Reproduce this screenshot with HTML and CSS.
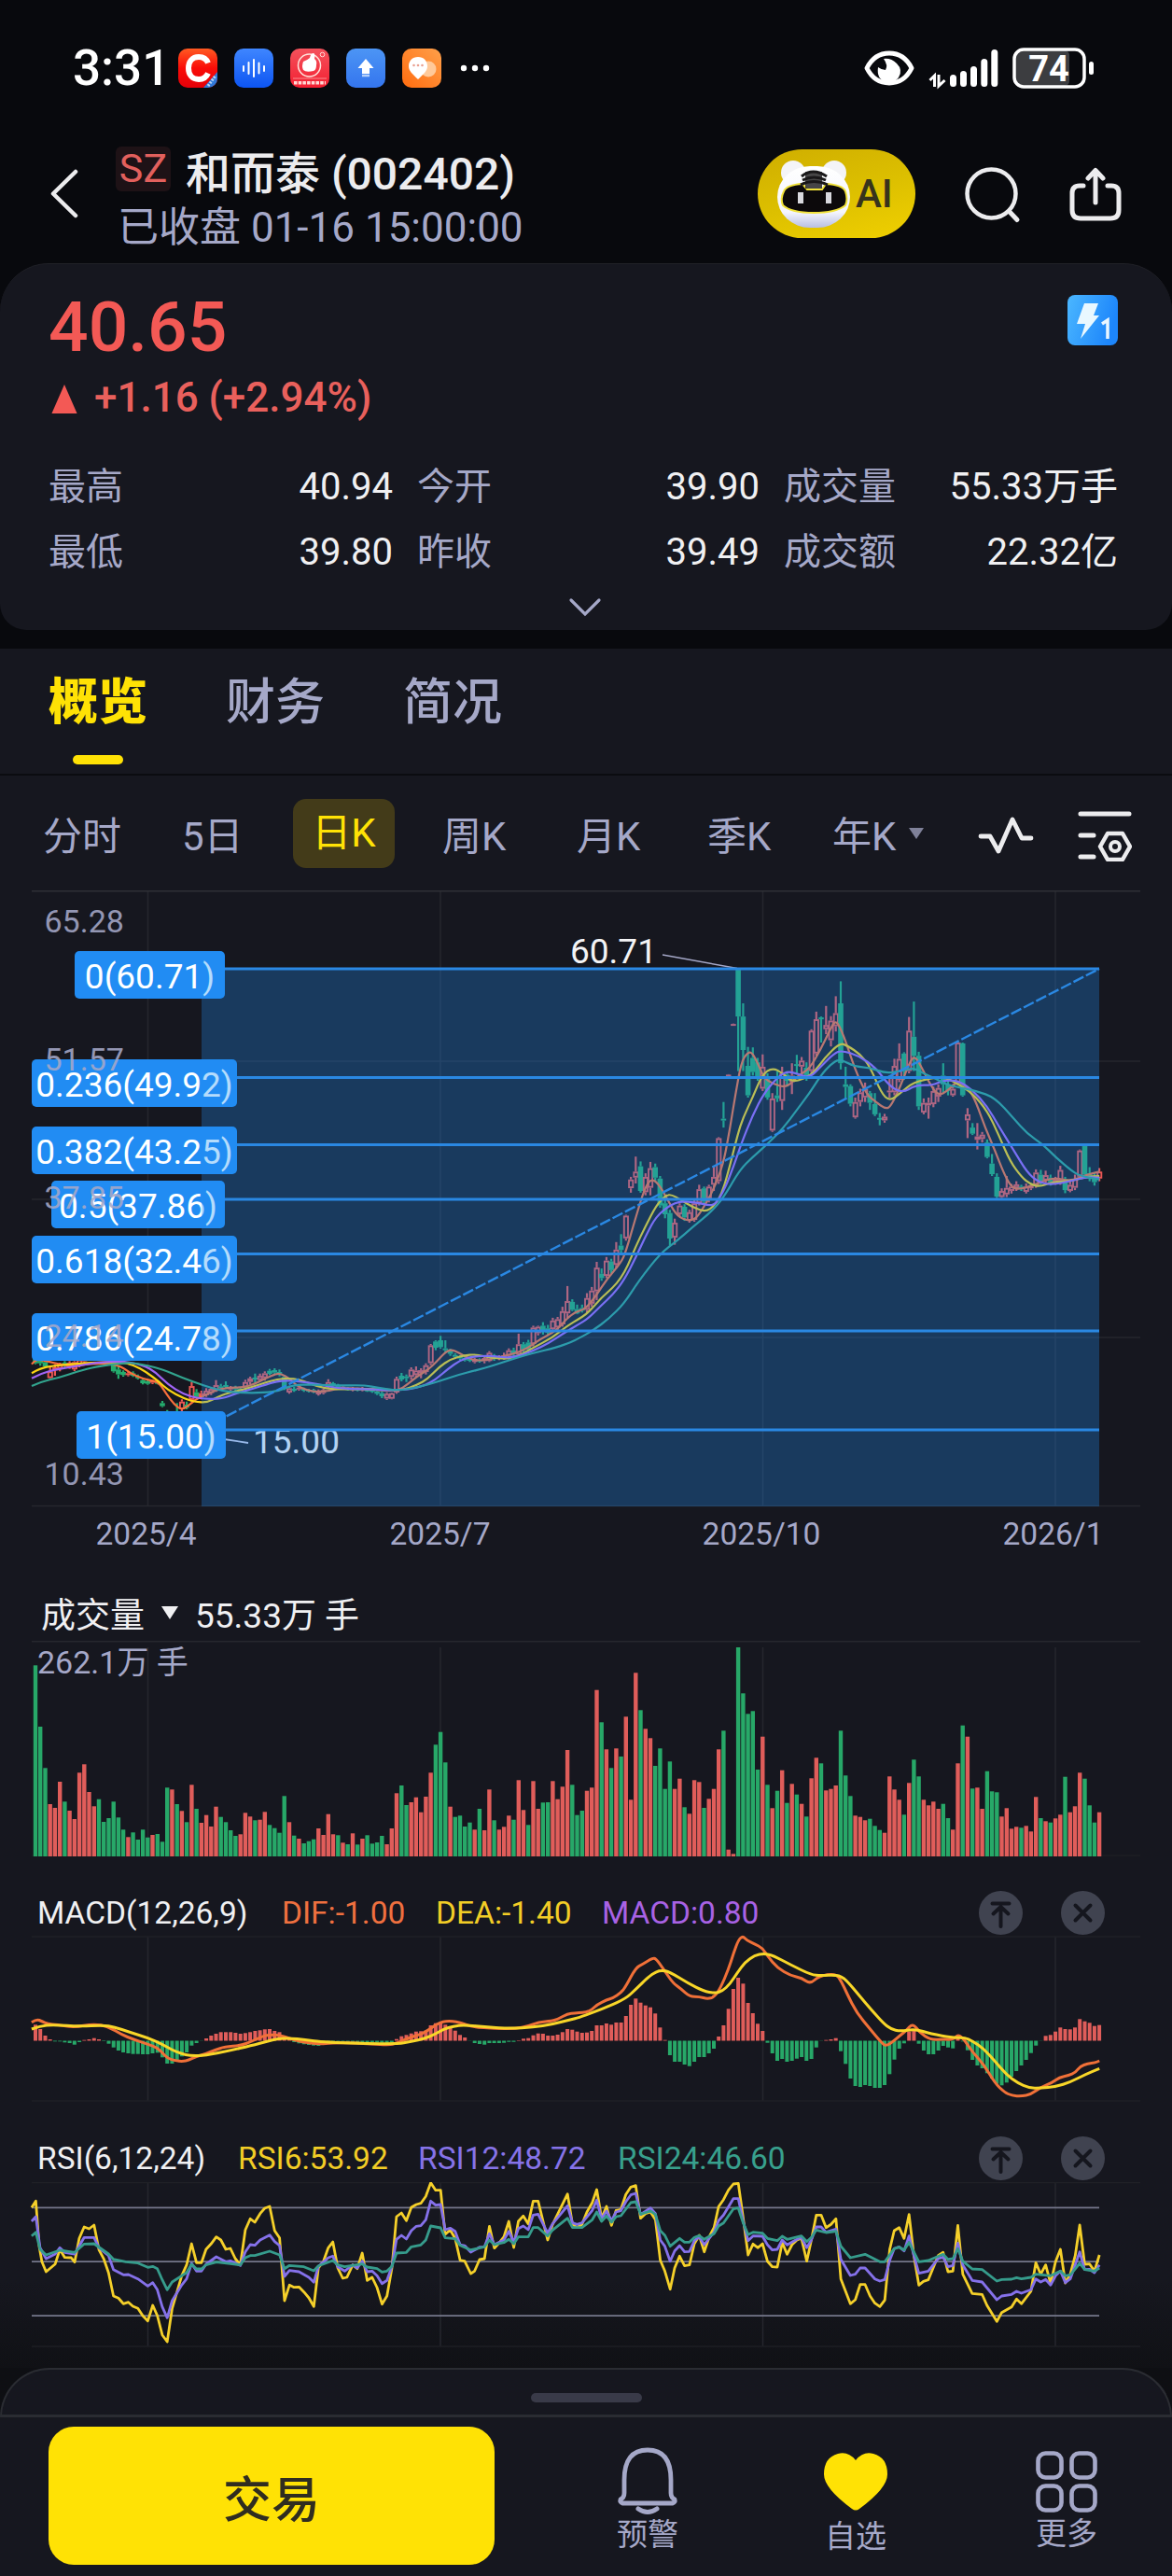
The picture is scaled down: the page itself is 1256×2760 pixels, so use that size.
FILE: index.html
```html
<!DOCTYPE html>
<html lang="zh-CN">
<head>
<meta charset="utf-8">
<title>和而泰 (002402)</title>
<link rel="stylesheet" href="styles.css">
</head>
<body>
<header class="status">
  <span class="clock">3:31</span>
  <div class="apps">
    <svg class="app" viewBox="0 0 42 42"><defs><linearGradient id="a1" x2="0" y2="1"><stop stop-color="#ff5a22"/><stop offset=".5" stop-color="#fa0c08"/><stop offset="1" stop-color="#e30009"/></linearGradient><clipPath id="ac"><rect width="42" height="42" rx="10"/></clipPath></defs><rect width="42" height="42" rx="10" fill="url(#a1)"/><path d="M32 15.500c-2-5-6-6.500-10-6.500-7 0-11 5-11 12s4 12 11 12c4 0 8-2 10-6.500" fill="none" stroke="#fff" stroke-width="6"/><path d="M42 25v17H27z" fill="#2e78d8" clip-path="url(#ac)"/><path d="M32 40l8-11" stroke="#b8d4f5" stroke-width="3" stroke-dasharray="2 1.500"/></svg>
    <svg class="app" viewBox="0 0 42 42"><defs><linearGradient id="a2" x2="0" y2="1"><stop stop-color="#3f86ff"/><stop offset="1" stop-color="#0d55f2"/></linearGradient></defs><rect width="42" height="42" rx="10" fill="url(#a2)"/><path d="M10 19v5M15.500 15v12M21 12v18M26.500 15.500v11M32 19v5" stroke="#fff" stroke-width="2" stroke-linecap="round"/></svg>
    <svg class="app" viewBox="0 0 42 42"><defs><linearGradient id="a3" x2="0" y2="1"><stop stop-color="#f4525c"/><stop offset="1" stop-color="#f31f31"/></linearGradient></defs><rect width="42" height="42" rx="10" fill="url(#a3)"/><circle cx="20.500" cy="18" r="12" fill="none" stroke="#ffe4dc" stroke-width="1.500"/><path d="M14 14q5-2 7-4 1-5 4-5 2 0 1 6 3 2 2 7 0 5-3 6-8 2-11-1-2-4 0-9z" fill="#fff"/><circle cx="34.500" cy="6.500" r="2.300" fill="none" stroke="#ffd9d5"/><path d="M3 32h36" stroke="#f98d90"/><path d="M4 36.800h34" stroke="#ffd9d5" stroke-width="3.600" stroke-dasharray="3.500 1.200"/></svg>
    <svg class="app" viewBox="0 0 42 42"><defs><linearGradient id="a4" x2="0" y2="1"><stop stop-color="#4c95f5"/><stop offset="1" stop-color="#3475ee"/></linearGradient></defs><rect width="42" height="42" rx="10" fill="url(#a4)"/><path d="M21 11l8.500 10h-4.500v6h-8v-6h-4.500z" fill="#fff"/><path d="M17 29h8" stroke="#b5d1fb" stroke-width="2.500"/></svg>
    <svg class="app" viewBox="0 0 42 42"><defs><linearGradient id="a5" x1="1" x2="0" y2="1"><stop stop-color="#ffa04a"/><stop offset="1" stop-color="#ff6c0f"/></linearGradient></defs><rect width="42" height="42" rx="10" fill="url(#a5)"/><circle cx="28" cy="22" r="8.500" fill="#ffc999"/><path d="M17 9c6 0 10 4 10 10 0 5-4 8-10 14-6-6-10-9-10-14 0-6 4-10 10-10z" fill="#fff"/><g fill="#e9a090"><circle cx="12.500" cy="18" r="1.300"/><circle cx="17" cy="18" r="1.300"/><circle cx="21.500" cy="18" r="1.300"/></g></svg>
  </div>
  <svg class="dots" viewBox="0 0 32 8" fill="#fff"><circle cx="4" cy="4" r="3.200"/><circle cx="16" cy="4" r="3.200"/><circle cx="28" cy="4" r="3.200"/></svg>
  <svg class="system" viewBox="924 48 252 48">
    <path d="M929 72q8-16 24-16t24 16q-8 16-24 16t-24-16z" fill="none" stroke="#fff" stroke-width="5" stroke-linejoin="round"/><path d="M947 62q8-1 14 5 7 7 2 15-5 7-13 5-11-3-9-16 4 3 8 3 3-5-2-12z" fill="#fff"/>
    <path d="M996.500 85l5-5v12M1006 79v12l6.500-6" fill="none" stroke="#fff" stroke-width="3"/>
    <path d="M1021.500 82.500v6M1032.500 78.500v10M1043.500 73.500v15M1054.800 65.500v23M1065.800 55.500v33" stroke="#fff" stroke-width="7" stroke-linecap="round"/>
    <rect x="1088" y="53" width="58" height="38" rx="5" fill="#3c3d40"/><rect x="1087" y="52" width="75" height="40" rx="10" fill="none" stroke="#fff" stroke-width="3.500"/><path d="M1169.500 67.500v9" stroke="#fff" stroke-width="5" stroke-linecap="round"/>
    <text x="1124" y="86" class="battery" text-anchor="middle">74</text>
  </svg>
</header>

<nav class="topbar">
  <svg class="back" viewBox="0 0 34 54"><path d="M30 4L6 27.500 30 51" fill="none" stroke="#ececee" stroke-width="4.500" stroke-linecap="round" stroke-linejoin="round"/></svg>
  <div class="name">
    <div class="title"><span class="market">SZ</span><span>和而泰 (002402)</span></div>
    <div class="session">已收盘 01-16 15:00:00</div>
  </div>
  <div class="ai">
    <svg viewBox="0 0 84 80"><defs><linearGradient id="hd" x2="0" y2="1"><stop stop-color="#fff"/><stop offset=".75" stop-color="#f4f5fd"/><stop offset="1" stop-color="#b9bfe2"/></linearGradient></defs><circle cx="20" cy="16" r="13" fill="#f4f4f7"/><circle cx="64" cy="16" r="13" fill="#f4f4f7"/><rect x="3" y="9" width="78" height="66" rx="35" fill="url(#hd)"/><path d="M10 36q3-7 20-8l5 6h16l4-6q18 1 21 8 3 9 0 15-10 8-34 8t-33-8q-3-7 1-15z" fill="#0c090b" stroke="#f1e23a" stroke-width="2"/><path d="M29 20q12-10 27 0M30 24q12-6 25 0M28 29q14-7 29 0" fill="none" stroke="#191819" stroke-width="3"/><path d="M33 15h18v18H33z" fill="#191819" opacity=".8"/><path d="M25 37h6v12h-6zM55 37h6v12h-6z" fill="#d9d9de"/></svg>
    <span>AI</span>
  </div>
  <svg class="search" viewBox="0 0 62 62"><ellipse cx="28.500" cy="28.500" rx="26" ry="26" fill="none" stroke="#ececee" stroke-width="4.500"/><path d="M48 48l8 8.500" stroke="#ececee" stroke-width="5" stroke-linecap="round"/></svg>
  <svg class="share" viewBox="0 0 56 58"><path d="M15 20H11q-8 0-8 8v18q0 9 9 9h32q9 0 9-9V28q0-8-8-8h-4M28 38V5M20 12l8-8.500 8 8.500" fill="none" stroke="#ececee" stroke-width="5" stroke-linecap="round" stroke-linejoin="round"/></svg>
</nav>

<section class="quote">
  <svg class="level" viewBox="0 0 54 54"><defs><linearGradient id="lv" x2="1" y2=".3"><stop stop-color="#4bb7ff"/><stop offset="1" stop-color="#1d86fb"/></linearGradient></defs><rect width="54" height="54" rx="8" fill="url(#lv)"/><path d="M18 9h15l-5 13h6L14 47l5-16h-9z" fill="#e9f8ff"/><path d="M37 31l6-4v20" fill="none" stroke="#eaf6ff" stroke-width="3.500"/></svg>
  <div class="price">40.65</div>
  <div class="change"><svg viewBox="0 0 28 32"><path d="M14 0l14 32H0z" fill="#f35955"/></svg>+1.16 (+2.94%)</div>
  <div class="stats">
    <div><i>最高</i><b>40.94</b></div><div><i>今开</i><b>39.90</b></div><div><i>成交量</i><b>55.33万手</b></div>
    <div><i>最低</i><b>39.80</b></div><div><i>昨收</i><b>39.49</b></div><div><i>成交额</i><b>22.32亿</b></div>
  </div>
  <svg class="expand" viewBox="0 0 36 22"><path d="M3 3l15 15L33 3" fill="none" stroke="#a5a8c8" stroke-width="3.200" stroke-linecap="round"/></svg>
</section>

<main>
  <div class="tabs"><span class="on">概览</span><span>财务</span><span>简况</span></div>
  <div class="periods">
    <span>分时</span><span>5日</span><span class="sel">日K</span><span>周K</span><span>月K</span><span>季K</span>
    <span>年K</span><svg class="tri" viewBox="0 0 16 12"><path d="M0 0h16L8 12z" fill="#7f8199"/></svg>
    <svg class="pulse" viewBox="0 0 60 42"><path d="M3 22h10l9 16L37 4l10 20h10" fill="none" stroke="#ececee" stroke-width="4.800" stroke-linecap="round" stroke-linejoin="round"/></svg>
    <svg class="tune" viewBox="0 0 58 54"><path d="M3 3h52M3 26h14M3 49h14" stroke="#ececee" stroke-width="5" stroke-linecap="round"/><path d="M32 24h16l8 14-8 14H32l-8-14z" fill="none" stroke="#ececee" stroke-width="4.500" stroke-linejoin="round"/><circle cx="40" cy="38" r="5" fill="none" stroke="#ececee" stroke-width="4"/></svg>
  </div>
  <svg id="kline" class="kline" viewBox="0 954 1256 726"></svg>
  <div class="vol-head"><span>成交量</span><svg viewBox="0 0 18 14"><path d="M0 0h18l-9 14z" fill="#f0f0f2"/></svg><span>55.33万 手</span></div>
  <svg id="volume" class="volume" viewBox="0 1758 1256 265"></svg>
  <div class="ind-head macd-head"><span>MACD(12,26,9)</span><span class="orange">DIF:-1.00</span><span class="gold">DEA:-1.40</span><span class="violet">MACD:0.80</span>
    <svg class="round" viewBox="0 0 47 47"><circle cx="23.500" cy="23.500" r="23.500" fill="#404350"/><path d="M14.500 13.500h18M23.500 38V17M15.500 24.500l8-7.500 8 7.500" fill="none" stroke="#15161e" stroke-width="4" stroke-linecap="round"/></svg>
    <svg class="round" viewBox="0 0 47 47"><circle cx="23.500" cy="23.500" r="23.500" fill="#404350"/><path d="M15.500 15.500l16 16M31.500 15.500l-16 16" stroke="#15161e" stroke-width="4" stroke-linecap="round"/></svg>
  </div>
  <svg id="macd" class="macd" viewBox="0 2075 1256 211"></svg>
  <div class="ind-head rsi-head"><span>RSI(6,12,24)</span><span class="gold">RSI6:53.92</span><span class="purple">RSI12:48.72</span><span class="teal">RSI24:46.60</span>
    <svg class="round" viewBox="0 0 47 47"><circle cx="23.500" cy="23.500" r="23.500" fill="#404350"/><path d="M14.500 13.500h18M23.500 38V17M15.500 24.500l8-7.500 8 7.500" fill="none" stroke="#15161e" stroke-width="4" stroke-linecap="round"/></svg>
    <svg class="round" viewBox="0 0 47 47"><circle cx="23.500" cy="23.500" r="23.500" fill="#404350"/><path d="M15.500 15.500l16 16M31.500 15.500l-16 16" stroke="#15161e" stroke-width="4" stroke-linecap="round"/></svg>
  </div>
  <svg id="rsi" class="rsi" viewBox="0 2338 1256 199"></svg>
</main>

<div class="dock"><div class="drawer"><i></i></div></div>
<footer class="actions">
  <button class="trade">交易</button>
  <div class="act alert"><svg viewBox="0 0 66 74"><path d="M8 36Q8 4 33 4t25 32v14q0 5 4 7 1 3-2 4H6q-3-1-2-4 4-2 4-7z" fill="none" stroke="#a5a8c8" stroke-width="4.800" stroke-linejoin="round"/><path d="M23 67q10 7 20 0" fill="none" stroke="#a5a8c8" stroke-width="5" stroke-linecap="round"/></svg><span>预警</span></div>
  <div class="act fav"><svg viewBox="0 0 68 62"><path d="M34 8Q42-2 53 1 68 5 68 23 68 38 38 60q-4 3-8 0Q0 38 0 23 0 5 15 1 26-2 34 8z" fill="#ffe205"/></svg><span>自选</span></div>
  <div class="act more"><svg viewBox="0 0 66 66"><g fill="none" stroke="#a5a8c8" stroke-width="4.600"><rect x="2.500" y="2.500" width="25" height="26" rx="8"/><rect x="38.500" y="2.500" width="25" height="26" rx="8"/><rect x="2.500" y="37.500" width="25" height="26" rx="8"/><rect x="38.500" y="37.500" width="25" height="26" rx="8"/></g></svg><span>更多</span></div>
</footer>
<script src="charts.js"></script>
</body>
</html>
```

FILE: styles.css
```css
* { box-sizing: border-box; }
body { margin: 0; width: 1256px; height: 2760px; overflow: hidden; background: #08090d; color: #f0f0f2; font-family: Roboto, "Noto Sans CJK SC", sans-serif; }
svg { display: block; flex: none; }
i, b { font-style: normal; font-weight: 400; }

.status { height: 146px; display: flex; align-items: center; padding: 0 80px 0 78px; }
.clock { width: 113px; font-size: 53px; font-weight: 500; color: #fff; }
.apps { display: flex; gap: 18px; }
.app { width: 42px; height: 42px; }
.dots { width: 32px; height: 8px; margin-left: 20px; }
.system { width: 252px; height: 48px; margin-left: auto; }
.battery { font-size: 38px; font-weight: 700; fill: #fff; }

.topbar { height: 136px; display: flex; align-items: flex-start; }
.back { width: 34px; height: 54px; margin: 34px 0 0 51px; }
.name { width: 727px; padding: 6px 0 0 39px; }
.title { display: flex; align-items: center; height: 60px; font-size: 48px; font-weight: 500; color: #ececee; white-space: nowrap; }
.market { width: 59px; height: 48px; margin: -3px 16px 0 0; border-radius: 6px; background: #1e1216; color: #e2605d; font-size: 43px; font-weight: 400; line-height: 47px; text-align: center; }
.session { height: 60px; margin-left: 2px; font-size: 44px; line-height: 64px; color: #a5a8c8; white-space: nowrap; }
.ai { width: 169px; height: 95px; margin-top: 14px; border-radius: 48px; background: linear-gradient(165deg, #cfae00 0%, #dcbf00 50%, #f0d000 100%); display: flex; align-items: center; padding-left: 18px; }
.ai svg { width: 84px; height: 80px; margin-top: 2px; }
.ai span { margin-left: 3px; font-size: 42px; font-weight: 500; color: #37331c; }
.search { width: 62px; height: 62px; margin: 33px 0 0 53px; }
.share { width: 56px; height: 58px; margin: 33px 0 0 50px; }

.quote { height: 393px; background: #16171f; border-radius: 52px 52px 28px 28px; border-top: 1px solid #202127; position: relative; padding: 22px 58px 0 52px; }
.level { position: absolute; right: 58px; top: 33px; width: 54px; height: 54px; }
.price { font-size: 75px; line-height: 90px; font-weight: 500; color: #f35955; }
.change { display: flex; align-items: center; height: 50px; margin-top: 6px; font-size: 44px; font-weight: 500; color: #e9605c; }
.change svg { width: 28px; height: 31px; margin: 2px 18px 0 3px; }
.stats { display: grid; grid-template-columns: 369px 367px 358px; column-gap: 26px; grid-auto-rows: 70px; margin-top: 36px; width: 1146px; font-size: 40px; line-height: 70px; }
.stats div { display: flex; justify-content: space-between; }
.stats i { color: #a5a8c8; }
.expand { width: 36px; height: 22px; margin: 13px auto 0 557px; }

main { margin-top: 20px; height: 1842px; background: linear-gradient(#16171f 0 1750px, #101115 1842px); }
.tabs { height: 136px; border-bottom: 2px solid #0b0c10; display: flex; padding: 0 52px; font-size: 53px; font-weight: 500; color: #a5a8c8; gap: 84px; line-height: 116px; }
.tabs .on { color: #ffe205; font-weight: 900; }
.tabs .on::after { content: ""; display: block; width: 54px; height: 10px; margin: -2px auto 0; border-radius: 5px; background: #ffe205; }
.periods { height: 123px; display: grid; align-items: center; grid-template-columns: 149px 119px 160px 144px 140px 134px 82px 74px 107px 60px; padding-left: 46px; font-size: 42px; color: #a5a8c8; }
.periods .sel { width: 109px; height: 74px; line-height: 74px; text-align: center; border-radius: 14px; background: #433b19; color: #ffe205; }
.tri { width: 16px; height: 12px; }
.pulse { width: 60px; height: 42px; margin-top: 4px; }
.tune { width: 58px; height: 54px; margin-top: 6px; }
.kline { width: 1256px; height: 726px; }
.vol-head { height: 78px; display: flex; align-items: center; gap: 18px; padding: 17px 0 0 44px; font-size: 37px; }
.vol-head svg { width: 18px; height: 14px; }
.volume { width: 1256px; height: 265px; }
.ind-head { height: 52px; display: grid; align-items: center; padding-left: 40px; font-size: 33.500px; white-space: nowrap; }
.macd-head { grid-template-columns: 262px 165px 178px 404px 88px 47px; }
.rsi-head { grid-template-columns: 215px 193px 214px 387px 88px 47px; }
.round { width: 47px; height: 47px; }
.macd { width: 1256px; height: 211px; overflow: visible; }
.rsi { width: 1256px; height: 199px; }
.orange { color: #ef703f; }
.gold { color: #f2cd26; }
.violet { color: #a862e4; }
.purple { color: #8673e8; }
.teal { color: #38a08d; }

.axis { font-size: 34px; fill: #a5a8c8; opacity: .88; }
.date { font-size: 33.500px; fill: #a5a8c8; }
.mark { font-size: 37px; fill: #f3f3f5; }
.vmax { font-size: 34px; fill: #a5a8c8; }

.dock { height: 53px; background: #0e0f13; }
.drawer { height: 53px; border: 2px solid #2a2c32; border-bottom-width: 3px; border-radius: 54px 54px 0 0; background: #16171f; padding-top: 25px; }
.drawer i { display: block; width: 119px; height: 10px; margin: 0 auto; border-radius: 5px; background: #393a48; }
.actions { height: 170px; background: #16171f; display: flex; align-items: flex-start; }
.trade { width: 478px; height: 148px; margin: 10px 0 0 52px; border: 0; border-radius: 27px; background: #ffe205; color: #302d20; font: 500 52px "Noto Sans CJK SC", sans-serif; }
.act { display: flex; flex-direction: column; align-items: center; font-size: 33px; line-height: 42px; color: #a5a8c8; }
.alert { margin: 31px 0 0 131px; }
.alert svg { width: 66px; height: 74px; }
.fav { margin: 38px 0 0 156px; }
.fav svg { width: 68px; height: 62px; margin-bottom: 7px; }
.more { margin: 36px 0 0 159px; }
.more svg { width: 66px; height: 66px; margin-bottom: 2px; }
```

FILE: charts.js
```js
const X0 = 38, STEP = 5.23;
const RED = '#e05d5a', GREEN = '#27a868';
const cx = i => X0 + STEP * i;
const r = n => Math.round(n * 10) / 10;
const line = (x1, y1, x2, y2, c, w) => `<path d="M${x1} ${y1}L${x2} ${y2}" stroke="${c}" stroke-width="${w}" fill="none"/>`;
const put = (id, s) => { document.getElementById(id).innerHTML = s; };
const cols = [158.5, 472, 817.5, 1131];
const grid = (a, b) => cols.map(x => line(x, a, x, b, '#26272e', 1.5)).join('');

// Segments hold flat x,y lists drawn in their own scale.
const scale = (s, f) => { const n = s.trim().split(/[\s,]+/).map(Number), o = []; for (let i = 0; i < n.length; i += 2) o.push(f(n[i], n[i + 1])); return o; };
const poly = (p, c, w) => `<path d="M${p.map(q => r(q[0]) + ' ' + r(q[1])).join('L')}" fill="none" stroke="${c}" stroke-width="${w}" stroke-linejoin="round"/>`;
const curve = (p, c, w) => {
  let d = `M${r(p[0][0])} ${r(p[0][1])}`;
  for (let i = 1; i < p.length - 1; i++) d += `Q${r(p[i][0])} ${r(p[i][1])} ${r((p[i][0] + p[i + 1][0]) / 2)} ${r((p[i][1] + p[i + 1][1]) / 2)}`;
  const e = p[p.length - 1];
  return `<path d="${d}L${r(e[0])} ${r(e[1])}" fill="none" stroke="${c}" stroke-width="${w}"/>`;
};
const kA = (x, y) => [30 + x / 3, 1330 + y / 3];
const kB = (x, y) => [620 + x / 2.465, 940 + y / 2.119];
const kM = (x, y) => [x / 2.45, 940 + y / 2.119];
const pA = (x, y) => [x / 2.45, 2010 + y / 3];
const pB = (x, y) => [620 + x / 2.465, 2010 + y / 3];

// Candles: high, body top, body bottom, low, colour (g = down, r = up)
const early = `340 350 392 395g,370 380 392 400g,385 388 402 405g,400 418 440 443r,395 405 415 432r,390 395 410 418r,385 390 400 405g,385 390 405 410r,385 388 412 417r,375 380 400 405r,360 370 386 390r,350 360 378 382r,350 355 375 380r,350 355 378 380g,355 365 380 382g,360 370 380 384g,380 390 418 422g,400 412 428 442g,415 420 430 435g,418 424 430 434r,418 424 432 436g,428 434 440 444g,440 446 456 460g,445 450 458 461g,445 448 455 459r,448 450 458 460g,513 520 530 533g,542 550 590 600g,550 560 580 600r,520 550 560 570g,508 515 540 548r,515 525 535 540g,452 465 510 516r,475 485 500 505g,480 488 500 508r,472 480 495 500r,468 474 488 494r,446 462 480 484r,458 466 472 478g,450 462 468 474g,465 470 476 480r,464 470 476 480g,470 474 478 482g,445 452 470 474r,435 440 452 460r,425 438 444 455g,425 432 446 450r,418 424 440 448r,410 416 426 430g,408 414 422 430g,412 420 426 434g,430 436 472 478g,464 472 486 490r,468 474 480 484g,464 470 476 480r,470 474 480 484g,474 477 482 486g,474 478 484 488g,476 482 492 496r,474 478 488 492r,443 452 466 474r,452 456 462 466g,458 462 468 472g,464 467 472 476r,468 472 476 480g,468 472 478 482r,470 473 478 482g,468 472 478 482r,472 476 480 484g,474 478 482 487g,478 482 490 494g,482 488 498 504g,485 490 506 510r,486 488 506 508r,435 442 486 490r,423 432 444 450g,428 434 440 452g,405 412 436 445r,402 415 430 438r,408 414 425 440r,392 398 420 428r,330 334 392 398r,318 322 342 350g,304 318 340 345g,318 344 350 360g,345 352 362 368g,360 365 371 375g,366 370 377 381g,370 374 382 386g,374 378 384 388g,374 378 388 392r,376 380 386 390g,370 375 385 392r,353 358 385 388r,362 368 378 384g,366 370 377 382r,358 366 374 380r,344 350 368 380r`;
const late = `1068 1074 1082 1088g,1036 1060 1084 1088r,1055 1060 1072 1078g,1050 1056 1072 1078g,1018 1022 1060 1065r,1018 1020 1035 1040r,1010 1018 1030 1038g,1016 1024 1034 1040g,1000 1006 1026 1030r,998 1003 1022 1030r,975 985 1015 1020r,928 962 990 1002r,958 964 982 985g,970 980 990 992g,970 978 984 988g,944 955 982 988r,930 938 968 975r,873 886 940 960r,888 900 910 916g,862 870 905 910r,866 872 892 900g,828 845 880 888r,810 836 846 855g,766 768 820 825r,680 686 706 716r,634 668 682 695r,645 656 712 716g,672 680 715 722r,646 660 705 722r,650 658 682 690g,678 684 745 750g,722 740 765 774g,755 762 820 836g,775 784 818 834r,740 745 765 770r,742 748 772 780g,755 760 780 784r,730 740 778 782r,698 708 740 745r,702 706 736 742g,698 702 730 738r,655 680 698 712r,590 592 690 696r,510 548 552 568g,447 448 450 451r,332 333 335 336r,208 210 316 440g,286 316 392 440g,385 428 495 500g,386 410 442 450g,410 420 452 462g,402 430 480 485r,445 455 500 505g,490 502 575 578r,440 495 502 510g,430 445 508 528r,440 448 462 475g,422 450 465 492r,403 424 427 448g,408 416 430 445r,420 432 455 462g,345 348 440 444r,305 322 400 405r,316 318 322 375g,292 335 345 356r,315 325 370 384r,270 308 338 350r,236 286 422 436g,430 470 476 502g,470 474 514 520g,500 510 545 548r,480 488 510 520r,466 480 500 510r,485 490 512 528g,490 515 538 542g,535 546 549 563g,537 543 552 557r,450 484 488 500r,412 428 488 495r,377 412 460 465r,397 400 440 460g,317 348 440 445r,282 362 405 440g,396 405 520 528g,502 512 534 538r,500 512 518 548r,475 485 515 522r,470 478 498 510r,422 450 470 490g,460 470 485 495g,470 480 495 498r,372 375 468 472r,375 377 495 498g,524 538 552 592r,558 568 582 585g,558 588 596 618r,578 584 594 602r,595 602 635 638g,628 650 674 678g,672 680 725 728g,706 712 726 728r,678 705 720 726r,696 702 712 718r,690 697 706 712r,698 702 708 712g,695 702 714 718r,695 699 706 710r,663 670 700 705r,664 675 690 698g,666 676 688 695r,675 682 692 700g,680 684 692 698r,655 664 690 698r,680 685 710 717g,690 698 712 715r,675 685 705 710r,618 620 680 684r,608 610 675 680g,658 672 682 690g,672 680 692 700g,660 668 684 690r`;
const candle = (s, i, f) => {
  const up = s.endsWith('r'), [h, t, b, l] = s.slice(0, -1).split(' ').map(v => f(0, +v)[1]), x = cx(i), c = up ? '#ec5754' : '#24ad6e';
  let o = line(r(x), r(h), r(x), r(t), c, 2.2) + line(r(x), r(b), r(x), r(l), c, 2.2);
  const bh = Math.max(b - t, 2);
  o += up && bh > 3.5 ? `<rect x="${r(x - 2)}" y="${r(t + 1)}" width="4.200" height="${r(bh - 2)}" fill="none" stroke="${c}" stroke-width="1.900"/>`
    : `<rect x="${r(x - 2.8)}" y="${r(t)}" width="5.600" height="${r(bh)}" fill="${c}"/>`;
  return o;
};

const averages = [
  ['#fa703c',
   '12,395 24,378 60,385 100,395 150,402 200,392 290,395 330,425 370,442 410,450 425,460 445,490 470,525 495,542 520,525 540,508 560,498 600,480 640,470 690,470 730,458 760,442 800,425 815,427 840,440 860,462 900,480 930,484 970,480 1000,472 1060,472 1140,480 1190,480 1220,460 1250,435 1290,410 1310,390 1340,358 1360,347 1385,358 1410,372 1440,384 1480,380 1560,362',
   '1385,1070 1415,1050 1460,1030 1490,1000 1510,988',
   '0,985 20,978 48,948 75,912 112,875 125,850 150,775 177,700 195,684 215,700 240,740 262,770 290,780 310,775 330,750 350,720 370,680 385,640 400,570 415,490 430,420 445,399 458,396 475,425 490,455 512,468 550,478 580,450 610,435 640,390 665,345 680,322 700,358 730,435 760,492 785,510 812,526 825,520 850,475 870,430 885,405 900,420 925,465 950,496 975,485 1000,462 1030,478 1050,510 1075,570 1100,620 1125,675 1145,705 1165,708 1200,700 1225,690 1260,682 1300,690 1340,676 1376,668'],
  ['#fbd413',
   '12,424 40,408 80,400 140,395 200,390 300,388 340,398 380,420 420,450 450,478 500,505 540,516 575,518 610,500 640,488 700,475 760,455 800,443 850,440 890,450 930,467 980,476 1060,475 1140,475 1200,480 1250,462 1285,442 1320,405 1360,378 1400,367 1440,363 1490,375 1560,378',
   '1400,1068 1450,1045 1490,1018',
   '0,1003 20,992 40,975 60,955 90,932 112,910 130,882 150,840 177,792 205,745 230,722 245,720 270,732 300,748 335,760 360,745 380,715 400,655 420,585 435,545 460,500 485,448 512,432 540,445 565,465 600,456 625,440 650,410 690,376 710,382 745,402 770,430 800,490 822,508 850,490 885,465 940,455 970,455 1000,468 1040,490 1080,530 1110,585 1140,645 1170,680 1195,698 1220,702 1250,692 1300,690 1340,680 1376,678'],
  ['#aa62f4',
   '12,440 40,425 90,412 150,402 220,390 300,385 370,397 410,420 450,460 500,492 550,506 625,507 670,488 720,475 780,455 820,447 870,450 930,458 1000,474 1080,475 1200,480 1270,466 1310,445 1350,410 1390,382 1430,370 1490,368 1560,376',
   '1400,1075 1440,1058 1480,1035',
   '0,1015 25,1002 60,972 90,948 120,915 150,865 180,810 205,770 240,745 270,735 310,738 345,745 362,742 385,710 410,655 430,605 460,540 490,490 525,455 550,440 580,446 610,456 640,430 675,400 695,393 740,405 785,432 820,473 855,490 890,472 935,472 960,462 1000,460 1040,482 1080,520 1110,565 1150,620 1185,670 1215,692 1250,698 1300,690 1340,680 1376,682'],
  ['#32a48e',
   '12,465 40,452 100,438 160,418 220,402 300,392 340,390 430,410 500,440 560,462 620,480 680,487 760,487 810,480 850,462 920,460 1000,464 1080,462 1130,472 1190,480 1260,468 1320,450 1380,430 1440,415 1500,398 1560,378',
   '1400,1080 1460,1068 1500,1055',
   '0,1047 40,1028 80,1002 120,968 160,915 215,855 260,825 300,795 350,760 385,725 425,665 460,635 500,605 540,570 575,530 610,490 640,450 665,425 690,412 730,430 770,432 810,445 850,440 885,432 910,445 940,455 970,470 1010,478 1050,485 1100,500 1150,548 1185,582 1225,605 1260,635 1300,665 1325,678 1376,686']
];

// Price panel
const BLUE = '#218cf3';
let k = grid(954, 1614) + line(34, 954.5, 1222, 954.5, '#2f3036', 2);
[1137, 1285, 1433, 1613.5].forEach(y => { k += line(34, y, 1222, y, '#26272e', 1.5); });
k += early.split(',').map((s, i) => candle(s, i, kA)).join('') + late.split(',').map((s, i) => candle(s, i + 98, kB)).join('');
averages.forEach(([c, a, m, b]) => {
  const flat = c === '#aa62f4' ? '#a064f6' : c;
  k += curve([...scale(a, kA), ...scale(m, kM), ...scale(b, kB)], flat, 2.2);
});
k += '<text x="611" y="1032" class="mark">60.71</text>' + line(710, 1023, 790, 1037.5, '#a5a8c8', 1.5);
k += '<text x="271" y="1557" class="mark">15.00</text>' + line(240, 1542, 266, 1546, '#c9cbe4', 1.8);
k += '<rect x="216" y="1038" width="962" height="576" fill="#218cf3" fill-opacity=".3"/>';
[1038, 1154.5, 1226.5, 1285, 1343.5, 1426, 1532].forEach(y => { k += line(200, y, 1178, y, '#2a88e3', 3); });
k += '<path d="M216 1531L1178 1038" stroke="#2a88e3" stroke-width="2.400" stroke-dasharray="12 3" fill="none"/>';
[[80, 1019, 161, '0(60.71)'], [34, 1135, 220, '0.236(49.92)'], [34, 1207, 220, '0.382(43.25)'], [55, 1265, 186, '0.5(37.86)'], [34, 1324, 220, '0.618(32.46)'], [34, 1407, 220, '0.786(24.78)'], [82, 1512, 160, '1(15.00)']].forEach(([x, y, w, t]) => {
  k += `<rect x="${x}" y="${y}" width="${w}" height="51" rx="5" fill="${BLUE}"/><text x="${x + w / 2}" y="${y + 40}" text-anchor="middle" font-size="37" fill="url(#fade)">${t}</text>`;
});
k += '<defs><linearGradient id="fade" gradientUnits="userSpaceOnUse" x1="215.500" x2="216.500" y1="0" y2="0"><stop stop-color="#fff"/><stop offset="1" stop-color="#b5dcfc"/></linearGradient></defs>';
[['65.28', 999], ['51.57', 1147], ['37.85', 1294.5], ['24.14', 1443], ['10.43', 1590.5]].forEach(([t, y]) => { k += `<text x="47.500" y="${y}" class="axis">${t}</text>`; });
[['2025/4', 156.5], ['2025/7', 471.5], ['2025/10', 816], ['2026/1', 1128.5]].forEach(([t, x]) => { k += `<text x="${x}" y="1655" text-anchor="middle" class="date">${t}</text>`; });
put('kline', k);

// Volume panel: bar tops below the panel's upper edge, in thirds of a pixel
const vol = '283g480g613g729r741r657r721g750r777r628r601r690r736r713g786g774g721g772g811g835r820g843g811g836g828r825g850g676g682r729g751r787g667r744g789r764r801r737r770g787g813g831g826r757r769r781g779r754r796g806g821g703g787r830g840r855g848g842g807r828r761r826r829g853r858g823r859g840r829g856g852g831g858r807r694r669g732g723r707r755r705r628r538g497g595g737r770g766g801g788g811r744g813r682r781g811r802r766r779g652r748r796g655r744r724g723g655r713r673r555r667g764g750g686r676r362r466g553r613g550r576g448r715r307r427g487r517r606g550g680g592g680r647r739g760r652r658r741g712r680r553r493g875r889r225g373g439g430g618g512r667g742r686g620r725g664r698g728r769g646r580r598g685r680r669r493g637g703g766r770r781r776g799g812g821r640r682r715r763g661r586g640g715r733r721r744r728g774g811r598r476g512r679g676r744r623g688g691g769r742r808r802r805g799r817r706r774g784r788g775r763r641g755r736r628r647g733g788g755r';
let v = line(34, 1758.8, 1222, 1758.8, '#26272e', 1.5) + grid(1765, 1989) + line(34, 1988, 1222, 1988, '#1e1f25', 1.5);
v += '<text x="40" y="1793" class="vmax">262.1万 手</text>';
[...vol.matchAll(/(\d+)([rg])/g)].forEach((m, i) => {
  const y = 1690 + m[1] / 3;
  v += `<rect x="${r(cx(i) - 2.2)}" y="${r(y)}" width="4.400" height="${r(1989 - y)}" fill="${m[2] === 'r' ? RED : GREEN}"/>`;
});
put('volume', v);

// MACD panel
const hist = '478 492 513 525 532 532 535 537 542 534 527 525 521 525 531 539 551 561 567 570 572 572 573 573 570 568 583 603 603 592 580 567 545 537 530 522 513 507 502 502 502 504 507 505 502 498 496 493 492 498 502 515 525 534 538 541 543 545 546 542 537 532 534 534 534 534 534 534 534 534 535 536 536 535 524 515 511 506 500 499 497 480 473 470 478 485 497 511 519 530 537 540 542 537 537 537 536 533 533 528 523 521 512 506 507 513 513 510 502 492 494 500 504 503 498 480 480 474 478 471 471 450 414 394 407 416 422 442 487 527 576 597 597 606 611 597 582 582 570 555 516 480 427 363 327 346 408 441 475 498 536 570 594 588 597 594 587 582 594 588 551 530 527 525 521 563 604 651 675 678 672 675 681 681 672 637 590 555 538 500 496 539 561 573 573 561 546 551 554 521 532 560 591 609 618 634 651 668 673 664 645 627 609 591 569 545 530 514 511 500 487 492 493 487 460 467 472 482 479'.split(' ');
let m = grid(2075, 2251) + line(34, 2075, 1222, 2075, '#1f2027', 1.5) + line(34, 2251, 1222, 2251, '#1f2027', 1.5);
hist.forEach((h, i) => {
  const d = (h - 529.5) / 3, y = 2186.5;
  m += `<rect x="${r(cx(i) - 2)}" y="${r(d < 0 ? y + d : y)}" width="4" height="${r(Math.abs(d))}" fill="${d < 0 ? RED : GREEN}"/>`;
});
m += curve([...scale('83,470 96,460 110,467 125,476 150,478 195,487 245,475 285,484 320,510 350,525 388,541 413,552 426,568 440,586 460,594 480,596 495,592 515,580 540,572 565,559 590,549 632,545 660,532 690,515 710,510 735,512 755,520 790,533 840,541 870,536 930,536 1020,544 1041,538 1070,522 1100,510 1120,500 1156,468 1185,466 1210,471 1240,485 1300,490 1350,491 1390,482 1413,470 1450,466 1465,460 1490,443 1510,441', pA), ...scale('0,440 20,438 35,430 48,414 75,398 90,393 112,375 125,355 151,295 170,283 195,264 205,266 225,300 250,345 270,362 293,387 320,388 340,395 358,390 375,360 396,300 409,250 422,206 434,193 445,207 465,218 486,232 500,258 525,295 560,320 590,328 612,347 635,322 680,313 695,340 710,380 735,440 770,492 800,535 812,547 830,533 850,512 865,498 883,473 900,502 930,527 965,525 990,526 1003,509 1020,527 1040,565 1070,605 1100,665 1125,695 1145,706 1170,708 1195,702 1220,680 1250,665 1270,647 1295,641 1312,632 1325,612 1345,603 1365,600 1376,594', pB)], '#f07038', 3);
m += curve([...scale('83,492 105,482 140,478 210,484 270,479 300,485 340,502 390,521 425,540 450,558 475,571 500,578 540,577 600,562 660,545 700,532 730,523 760,521 800,526 850,535 1040,541 1080,532 1115,522 1140,510 1165,492 1190,483 1220,479 1280,486 1340,490 1400,486 1450,477 1500,461', pA), ...scale('0,455 40,438 75,421 125,394 150,365 185,324 205,308 220,303 240,308 290,345 330,370 360,377 380,370 400,347 420,310 440,277 465,255 490,249 515,256 560,285 615,318 640,320 680,318 695,324 710,338 740,382 775,432 805,473 825,492 850,499 890,492 930,507 990,520 1020,519 1040,530 1070,555 1100,595 1130,638 1160,665 1190,681 1220,682 1260,677 1300,662 1340,637 1376,619', pB)], '#f8d628', 3);
put('macd', m);

// RSI panel
let s = grid(2338, 2514) + line(34, 2338.5, 1222, 2338.5, '#202127', 1.5) + line(34, 2514, 1222, 2514, '#1e1f24', 1.5);
[2365.3, 2423.2, 2481.2].forEach(y => { s += line(34, y, 1178, y, '#75778b', 1.8); });
s += poly([...scale('83,1066 94,1045 103,1190 110,1240 121,1272 145,1247 157,1200 170,1226 187,1227 196,1241 208,1165 221,1128 234,1134 247,1122 260,1202 273,1232 285,1275 298,1350 311,1357 324,1375 337,1370 349,1383 362,1390 375,1414 388,1430 401,1380 413,1413 426,1475 439,1497 452,1390 464,1340 477,1285 490,1250 503,1182 516,1243 529,1243 541,1200 554,1183 568,1160 580,1170 593,1200 605,1197 618,1230 631,1250 644,1138 657,1102 669,1113 683,1085 695,1068 708,1062 721,1140 734,1163 747,1365 760,1315 772,1322 785,1321 798,1337 811,1356 824,1384 836,1260 849,1240 862,1195 874,1176 887,1260 900,1293 911,1290 926,1250 938,1262 951,1212 964,1300 977,1290 990,1323 1003,1376 1016,1350 1029,1260 1041,1095 1054,1083 1067,1108 1080,1065 1093,1056 1105,1052 1118,1030 1131,986 1144,1010 1157,1010 1169,1152 1182,1138 1195,1165 1208,1235 1220,1238 1236,1278 1246,1270 1259,1233 1272,1230 1285,1126 1298,1196 1310,1180 1323,1160 1336,1110 1349,1194 1361,1110 1374,1093 1387,1118 1400,1045 1413,1045 1438,1170 1451,1120 1490,1022 1503,1120 1515,1130 1528,1120 1541,1080 1555,1050', pA), ...scale('48,1008 61,1100 74,1062 87,1123 99,1075 112,1072 125,1024 138,1000 151,995 164,1100 177,1085 190,1080 203,1105 216,1235 228,1270 242,1328 254,1260 267,1222 280,1253 293,1250 306,1182 319,1155 332,1208 345,1160 358,1130 370,1063 383,1040 396,1010 409,990 422,988 435,1100 448,1218 461,1183 474,1195 486,1182 499,1238 512,1256 525,1257 538,1178 551,1216 564,1185 577,1170 589,1165 603,1238 615,1170 628,1090 641,1090 654,1130 667,1120 680,1102 693,1295 718,1375 731,1362 744,1313 757,1313 770,1350 783,1373 796,1384 809,1363 822,1200 834,1140 847,1130 860,1165 873,1088 886,1220 899,1315 911,1303 924,1298 950,1220 963,1210 976,1272 989,1270 1002,1123 1015,1280 1040,1342 1066,1345 1079,1380 1105,1432 1118,1403 1144,1385 1157,1360 1170,1375 1195,1335 1208,1243 1221,1280 1234,1250 1247,1310 1260,1240 1273,1200 1286,1308 1299,1280 1312,1220 1324,1122 1337,1248 1350,1247 1363,1270 1376,1218', pB)], '#f5d02a', 2.8);
s += poly([...scale('83,1110 94,1095 105,1195 121,1230 145,1215 157,1195 170,1210 196,1215 221,1162 247,1162 260,1195 285,1220 298,1265 324,1282 337,1281 362,1295 388,1318 401,1307 413,1330 426,1385 439,1420 452,1365 477,1315 490,1295 503,1245 516,1270 529,1270 541,1248 568,1224 593,1240 605,1237 631,1252 644,1208 657,1185 669,1187 683,1170 708,1154 721,1175 734,1188 747,1287 760,1268 785,1272 811,1290 824,1306 836,1255 862,1227 874,1222 887,1256 905,1270 926,1250 938,1260 951,1238 964,1272 977,1270 990,1285 1003,1310 1016,1300 1029,1255 1041,1168 1054,1155 1067,1167 1080,1140 1093,1126 1105,1124 1118,1105 1131,1045 1144,1058 1157,1056 1169,1137 1182,1132 1195,1142 1208,1185 1220,1188 1236,1209 1259,1193 1272,1192 1285,1150 1298,1185 1323,1170 1336,1142 1349,1177 1361,1133 1374,1125 1387,1137 1400,1090 1413,1087 1438,1148 1451,1118 1490,1060 1503,1115 1515,1120 1528,1115 1555,1075', pA), ...scale('48,1042 61,1102 74,1077 87,1108 99,1080 112,1076 125,1047 138,1025 151,1020 164,1088 190,1067 203,1085 216,1170 228,1190 242,1238 254,1205 267,1188 280,1208 293,1207 306,1172 319,1160 332,1185 358,1145 370,1108 383,1090 409,1037 422,1037 435,1110 448,1172 461,1157 486,1158 499,1185 512,1202 525,1200 538,1170 551,1186 577,1168 589,1162 603,1195 615,1170 628,1128 641,1128 654,1145 680,1135 693,1232 718,1284 731,1280 744,1260 757,1260 783,1295 796,1302 809,1297 822,1235 834,1198 847,1192 860,1205 873,1157 886,1220 899,1277 924,1270 950,1230 963,1225 976,1256 989,1252 1002,1180 1015,1250 1040,1300 1066,1305 1105,1362 1118,1350 1144,1345 1157,1335 1170,1341 1195,1330 1208,1295 1221,1305 1234,1297 1247,1315 1260,1285 1273,1270 1286,1307 1299,1295 1324,1208 1337,1265 1350,1264 1363,1275 1376,1250', pB)], '#8571ea', 2.8);
s += poly([...scale('83,1157 94,1145 105,1200 121,1218 157,1203 196,1210 221,1183 247,1182 285,1215 298,1232 330,1240 362,1244 388,1258 401,1255 413,1262 426,1298 439,1330 452,1305 477,1285 490,1275 503,1248 516,1263 529,1263 541,1250 568,1241 605,1246 631,1250 644,1227 657,1220 669,1220 708,1206 734,1218 747,1262 760,1252 798,1256 824,1269 836,1253 874,1236 887,1250 905,1256 951,1247 964,1257 990,1262 1003,1273 1016,1270 1029,1255 1041,1212 1067,1210 1080,1192 1105,1186 1118,1170 1131,1125 1157,1131 1169,1163 1195,1166 1208,1187 1236,1202 1272,1192 1285,1170 1298,1185 1323,1178 1336,1168 1349,1182 1361,1160 1387,1160 1400,1130 1413,1130 1438,1157 1451,1138 1490,1100 1503,1130 1528,1130 1555,1105', pA), ...scale('48,1080 61,1110 74,1093 87,1113 99,1095 112,1092 138,1050 151,1047 164,1087 190,1077 203,1088 216,1140 228,1155 242,1190 267,1165 280,1177 293,1177 306,1162 319,1156 332,1168 358,1150 370,1125 383,1115 409,1070 422,1067 435,1115 448,1153 461,1145 486,1148 499,1165 525,1172 538,1158 551,1168 589,1157 603,1175 615,1162 628,1138 654,1146 680,1142 693,1190 718,1227 757,1216 796,1240 809,1240 834,1198 847,1193 860,1202 873,1178 899,1240 924,1236 963,1216 976,1232 989,1230 1002,1198 1015,1238 1040,1263 1066,1265 1105,1302 1118,1297 1144,1296 1157,1291 1170,1295 1195,1290 1208,1280 1247,1285 1273,1270 1286,1285 1299,1282 1324,1245 1337,1265 1363,1270 1376,1260', pB)], '#369c8c', 2.8);
put('rsi', s);
```
